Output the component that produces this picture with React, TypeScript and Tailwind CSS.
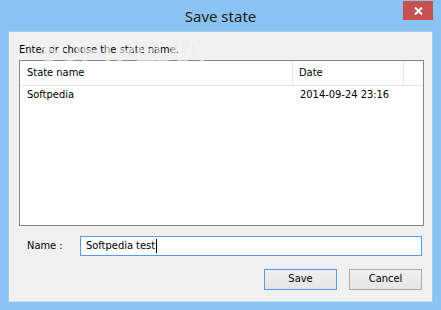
import React from "react";

const body = "font-['DejaVu_Sans_Condensed','DejaVu_Sans',sans-serif] text-[11px] text-black";

export default function App() {
  return (
    <div className="w-[441px] h-[310px] bg-[#8bc4f4] flex flex-col relative overflow-hidden">
      {/* title bar */}
      <div className="h-[31px] shrink-0 flex items-center justify-center relative">
        <span className="font-['Noto_Sans',sans-serif] text-[15px] text-[#1b1b1b] leading-none mt-[1px]">Save state</span>
        <div className="absolute right-[8px] top-[1px] w-[30px] h-[19px] bg-[#c75050] flex items-center justify-center">
          <svg width="9" height="8" viewBox="0 0 9 8">
            <path d="M1 0.5 L8 7.5 M8 0.5 L1 7.5" stroke="white" strokeWidth="2" />
          </svg>
        </div>
      </div>

      {/* client area */}
      <div className={`mx-[8px] mb-[8px] flex-1 bg-[#f0f0f0] border border-[#a7c8e6] border-b-[#c9dff2] flex flex-col pl-[10px] pr-[8px] relative ${body}`}>
        <div className="h-[28px] flex items-end pb-[5px] leading-none">Enter or choose the state name.</div>
        <div className="h-[166px] bg-white border border-[#828790] flex flex-col">
          <div className="h-[25px] flex border-b border-[#e5e5e5] items-center">
            <div className="w-[273px] h-full flex items-center pl-[7px] border-r border-[#e5e5e5]">State name</div>
            <div className="w-[111px] h-full flex items-center pl-[6px] border-r border-[#e5e5e5]">Date</div>
            <div className="flex-1" />
          </div>
          <div className="h-[19px] flex items-center">
            <div className="w-[274px] pl-[7px]">Softpedia</div>
            <div className="pl-[6px]">2014-09-24 23:16</div>
          </div>
        </div>
        <div className="mt-[10px] flex items-center h-[20px]">
          <div className="w-[61px] pl-[8px]">Name :</div>
          <div className="w-[342px] h-[20px] border border-[#569de5] bg-white flex items-center pl-[5px]">
            <span>Softpedia test</span>
            <span className="inline-block w-[1px] h-[14px] bg-black ml-[1px]" />
          </div>
        </div>
        <div className="mt-[13px] flex justify-end gap-[12px] pr-[2px]">
          <button className="w-[73px] h-[21px] border border-[#569de5] bg-gradient-to-b from-[#f0f0f0] to-[#e5e5e5] flex items-center justify-center">Save</button>
          <button className="w-[73px] h-[21px] border border-[#acacac] bg-gradient-to-b from-[#f0f0f0] to-[#e5e5e5] flex items-center justify-center">Cancel</button>
        </div>
      </div>

      {/* watermark */}
      <div className="absolute left-[38px] top-[34px] font-['Liberation_Sans',sans-serif] font-bold text-[32px] tracking-[-2px] text-white/60 leading-none pointer-events-none select-none [text-shadow:0_0_1px_rgba(0,0,0,0.06)]">
        SOFTPEDIA<span className="text-[9px] align-top ml-[3px] tracking-normal">®</span>
      </div>
    </div>
  );
}
